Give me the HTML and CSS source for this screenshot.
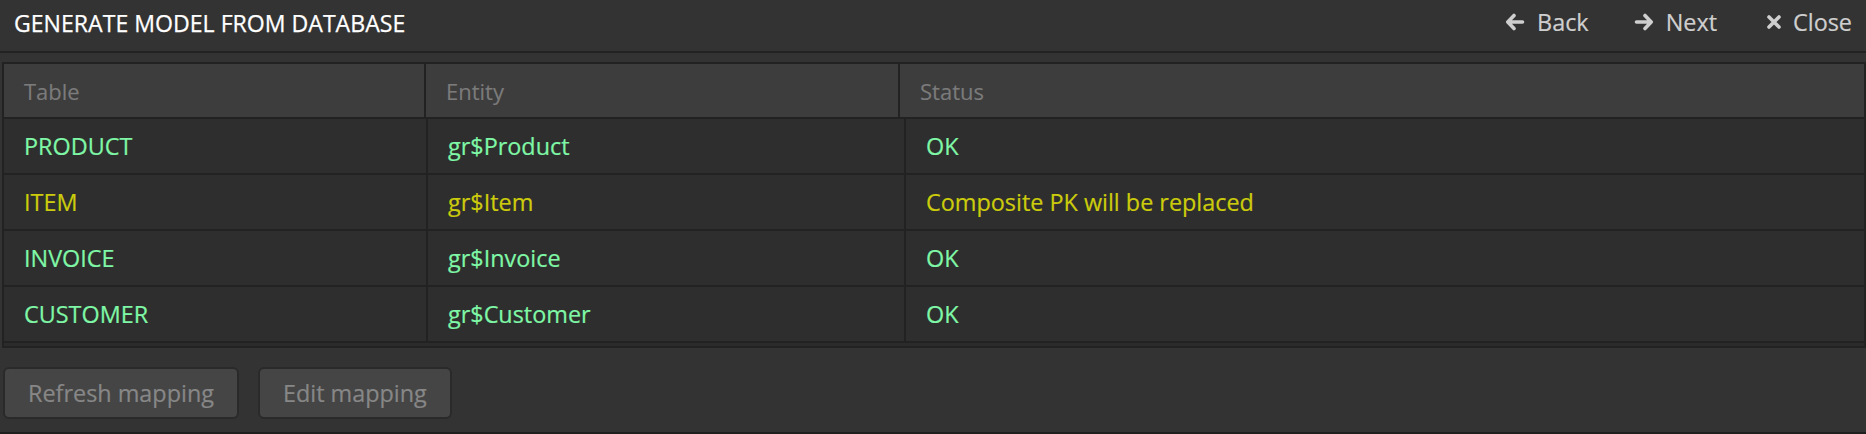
FILE: index.html
```html
<!DOCTYPE html>
<html>
<head>
<meta charset="utf-8">
<link rel="stylesheet" href="styles.css">
</head>
<body>
<div class="dialog">
  <div class="titlebar">
    <div class="title">GENERATE MODEL FROM DATABASE</div>
    <div class="nav">
      <span class="nav-item">
        <svg class="icon arrow" viewBox="0 0 20 18" width="20" height="18"><path d="M9 2.5 L2.8 9 L9 15.5 M3.5 9 H17.5" fill="none" stroke="currentColor" stroke-width="3.6" stroke-linecap="round" stroke-linejoin="round"/></svg>
        Back
      </span>
      <span class="nav-item">
        <svg class="icon arrow" viewBox="0 0 20 18" width="20" height="18"><path d="M11 2.5 L17.2 9 L11 15.5 M16.5 9 H2.5" fill="none" stroke="currentColor" stroke-width="3.6" stroke-linecap="round" stroke-linejoin="round"/></svg>
        Next
      </span>
      <span class="nav-item close-item">
        <svg class="icon close" viewBox="0 0 16 14" width="16" height="14"><path d="M3 2 L13 12 M13 2 L3 12" fill="none" stroke="currentColor" stroke-width="3.6" stroke-linecap="round"/></svg>
        Close
      </span>
    </div>
  </div>
  <div class="content">
    <div class="grid">
      <div class="head-row">
        <div class="hcell c1">Table</div>
        <div class="hcell c2">Entity</div>
        <div class="hcell c3">Status</div>
      </div>
      <div class="body">
        <div class="row ok">
          <div class="cell b1">PRODUCT</div>
          <div class="cell b2">gr$Product</div>
          <div class="cell b3">OK</div>
        </div>
        <div class="row warn">
          <div class="cell b1">ITEM</div>
          <div class="cell b2">gr$Item</div>
          <div class="cell b3">Composite PK will be replaced</div>
        </div>
        <div class="row ok">
          <div class="cell b1">INVOICE</div>
          <div class="cell b2">gr$Invoice</div>
          <div class="cell b3">OK</div>
        </div>
        <div class="row ok">
          <div class="cell b1">CUSTOMER</div>
          <div class="cell b2">gr$Customer</div>
          <div class="cell b3">OK</div>
        </div>
      </div>
    </div>
    <div class="footer">
      <button class="btn">Refresh mapping</button>
      <button class="btn">Edit mapping</button>
    </div>
  </div>
</div>
</body>
</html>
```

FILE: styles.css
```css
html, body {
  margin: 0;
  padding: 0;
  background: #333333;
}

body {
  font-family: "Open Sans", "Noto Sans", sans-serif;
  width: 1866px;
  height: 434px;
  overflow: hidden;
  -webkit-font-smoothing: antialiased;
}

.dialog {
  height: 432px;
  border-bottom: 2px solid #1f1f1f;
  display: flex;
  flex-direction: column;
}

.titlebar {
  box-sizing: border-box;
  height: 53px;
  border-bottom: 2px solid #222222;
  padding: 0 14px 5px 14px;
  display: flex;
  align-items: center;
  justify-content: space-between;
  background: #333333;
}

.title {
  color: #ffffff;
  font-size: 23.1px;
  line-height: 31px;
  -webkit-text-stroke: 0.25px #ffffff;
}

.nav {
  display: flex;
  align-items: center;
  gap: 45px;
}

.nav-item {
  display: flex;
  align-items: center;
  gap: 12px;
  color: #cfcfcf;
  font-size: 23.4px;
  line-height: 31px;
  margin-top: -2px;
  -webkit-text-stroke: 0.2px #cfcfcf;
}

.close-item {
  margin-left: 4px;
  gap: 11px;
}

.icon {
  display: block;
  color: #cfcfcf;
}

.content {
  padding: 9px 0 0 2px;
}

.grid {
  border: 2px solid #222222;
  background: #2b2b2b;
}

.head-row {
  display: flex;
  height: 53px;
  background: #3d3d3d;
  border-bottom: 2px solid #222222;
}

.hcell {
  display: flex;
  align-items: center;
  padding-left: 20px;
  box-sizing: border-box;
  color: #7b7b7b;
  font-size: 22px;
  -webkit-text-stroke: 0.15px #7b7b7b;
}

.c1 { width: 422px; border-right: 2px solid #222222; flex: none; }
.c2 { width: 474px; border-right: 2px solid #222222; flex: none; }
.c3 { flex: 1; }

.body {
  padding-bottom: 3px;
}

.row {
  display: flex;
  height: 54px;
  background: #2e2e2e;
  border-bottom: 2px solid #222222;
}

.cell {
  display: flex;
  align-items: center;
  padding-left: 20px;
  box-sizing: border-box;
  font-size: 23.4px;
  -webkit-text-stroke: 0.2px currentColor;
}

.b1 { width: 424px; border-right: 2px solid #222222; flex: none; }
.b2 { width: 478px; border-right: 2px solid #222222; flex: none; }
.b3 { flex: 1; }

.row.ok .cell { color: #7ff7a6; }
.row.warn .cell { color: #cccc0c; }

.footer {
  display: flex;
  gap: 19px;
  padding: 19px 0 0 1px;
}

.btn {
  height: 52px;
  padding: 0 23px;
  background: #454545;
  border: 2px solid #2a2a2a;
  border-radius: 6px;
  color: #878787;
  font-family: "Open Sans", "Noto Sans", sans-serif;
  font-size: 23.4px;
  -webkit-text-stroke: 0.2px #878787;
}
```
